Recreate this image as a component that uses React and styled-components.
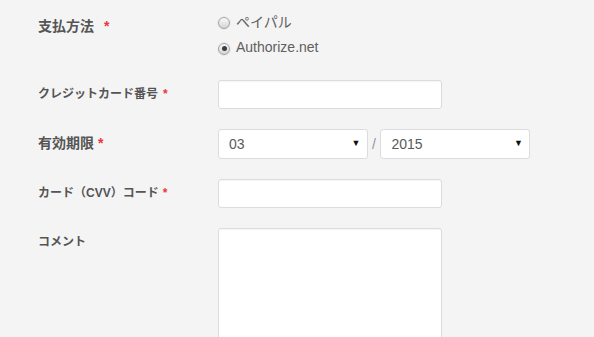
import React, { useState } from "react";
import styled, { createGlobalStyle } from "styled-components";

const GlobalStyle = createGlobalStyle`
	html, body {
		margin: 0;
		padding: 0;
		background: #f4f4f4;
	}
	body {
		font-family: "Liberation Sans", Arial, "Noto Sans CJK JP", sans-serif;
		color: #555;
	}
`;

const Form = styled.form`
	display: grid;
	grid-template-columns: 180px 224px;
	row-gap: 20px;
	padding: 8px 0 0 38px;
`;

const Label = styled.label`
	font-family: "Liberation Sans", Arial, "Noto Sans CJK JP", sans-serif;
	font-weight: bold;
	font-size: ${(props) => props.size || 13}px;
	color: #555;
	line-height: 29px;
	padding-top: ${(props) => props.offset || 0}px;
	white-space: nowrap;
`;

const Star = styled.span`
	color: #e8373c;
	font-family: "Liberation Sans", Arial, sans-serif;
	margin-left: ${(props) => props.gap || 4}px;
`;

const RadioGroup = styled.div`
	display: flex;
	flex-direction: column;
`;

const RadioRow = styled.label`
	display: flex;
	align-items: center;
	height: 26px;
	font-size: 14px;
	color: #606060;
	cursor: pointer;
`;

const RadioDot = styled.span`
	box-sizing: border-box;
	width: 12px;
	height: 12px;
	border-radius: 50%;
	border: 1px solid #a4a4a4;
	background: linear-gradient(#fafafa, #d4d4d4);
	box-shadow: 0 0 0 1px rgba(0, 0, 0, 0.04);
	margin-right: 6px;
	display: flex;
	align-items: center;
	justify-content: center;
	margin-top: 3px;

	&::after {
		content: "";
		width: 5px;
		height: 5px;
		border-radius: 50%;
		background: ${(props) => (props.checked ? "#3d3d3d" : "transparent")};
	}
`;

const TextInput = styled.input`
	box-sizing: border-box;
	width: 224px;
	height: 29px;
	border: 1px solid #dcdcdc;
	border-radius: 3px;
	background: #fff;
	box-shadow: inset 0 1px 1px rgba(0, 0, 0, 0.04);
	outline: none;
`;

const TextArea = styled.textarea`
	box-sizing: border-box;
	width: 224px;
	height: 130px;
	border: 1px solid #dcdcdc;
	border-radius: 3px;
	background: #fff;
	box-shadow: inset 0 1px 1px rgba(0, 0, 0, 0.04);
	resize: none;
	outline: none;
`;

const DateRow = styled.div`
	display: flex;
	align-items: center;
	width: 312px;
`;

const SelectWrap = styled.div`
	position: relative;
	width: 150px;
	height: 30px;
`;

const Select = styled.select`
	appearance: none;
	box-sizing: border-box;
	width: 100%;
	height: 100%;
	border: 1px solid #dcdcdc;
	border-radius: 3px;
	background: #fff;
	padding: 0 0 0 10px;
	font-family: "Liberation Sans", Arial, sans-serif;
	font-size: 14px;
	color: #5a5a5a;
	outline: none;
`;

const Arrow = styled.span`
	position: absolute;
	right: 7px;
	top: 9px;
	font-size: 9px;
	color: #111;
	pointer-events: none;
`;

const Slash = styled.span`
	width: 13px;
	text-align: center;
	font-size: 14px;
	color: #8a96a8;
`;

const months = ["01", "02", "03", "04", "05", "06", "07", "08", "09", "10", "11", "12"];
const years = ["2015", "2016", "2017", "2018", "2019", "2020"];

const App = () => {
	const [method, setMethod] = useState("authorize");
	const [month, setMonth] = useState("03");
	const [year, setYear] = useState("2015");

	return (
		<>
			<GlobalStyle />
			<Form onSubmit={(e) => e.preventDefault()}>
				<Label size={14} offset={4}>
					支払方法<Star gap={10}>*</Star>
				</Label>
				<RadioGroup>
					<RadioRow onClick={() => setMethod("paypal")}>
						<RadioDot checked={method === "paypal"} />
						ペイパル
					</RadioRow>
					<RadioRow onClick={() => setMethod("authorize")}>
						<RadioDot checked={method === "authorize"} />
						Authorize.net
					</RadioRow>
				</RadioGroup>

				<Label size={12}>
					クレジットカード番号<Star gap={5}>*</Star>
				</Label>
				<TextInput type='text' />

				<Label size={14}>
					有効期限<Star>*</Star>
				</Label>
				<DateRow>
					<SelectWrap>
						<Select value={month} onChange={(e) => setMonth(e.target.value)}>
							{months.map((m) => (
								<option key={m}>{m}</option>
							))}
						</Select>
						<Arrow>▼</Arrow>
					</SelectWrap>
					<Slash>/</Slash>
					<SelectWrap>
						<Select value={year} onChange={(e) => setYear(e.target.value)}>
							{years.map((y) => (
								<option key={y}>{y}</option>
							))}
						</Select>
						<Arrow>▼</Arrow>
					</SelectWrap>
				</DateRow>

				<Label size={12}>
					カード（CVV）コード<Star>*</Star>
				</Label>
				<TextInput type='text' />

				<Label size={12}>コメント</Label>
				<TextArea />
			</Form>
		</>
	);
};

export default App;
